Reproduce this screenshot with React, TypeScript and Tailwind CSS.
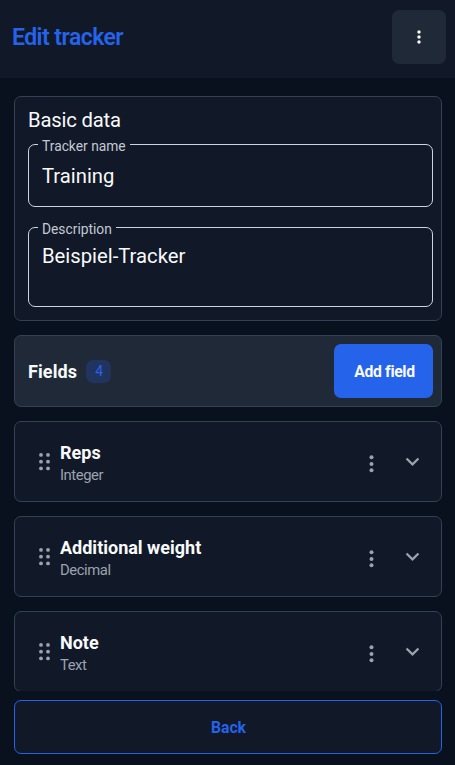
import React from 'react';
import { MdExpandMore, MdMoreVert } from 'react-icons/md';

interface TrackerField {
  id: string;
  name: string;
  type: string;
}

const fields: TrackerField[] = [
  { id: 'reps', name: 'Reps', type: 'Integer' },
  { id: 'weight', name: 'Additional weight', type: 'Decimal' },
  { id: 'note', name: 'Note', type: 'Text' },
];

const DragDots = ({ className }: { className?: string }) => (
  <svg viewBox="0 0 27 27" fill="currentColor" className={className}>
    {[6.9, 13.7, 20.4].map((y) => (
      <React.Fragment key={y}>
        <circle cx="10" cy={y} r="1.9" />
        <circle cx="17" cy={y} r="1.9" />
      </React.Fragment>
    ))}
  </svg>
);

const MoreDots = ({ className }: { className?: string }) => (
  <svg viewBox="0 0 27 27" fill="currentColor" className={className}>
    <circle cx="13.5" cy="7.2" r="2" />
    <circle cx="13.5" cy="13.9" r="2" />
    <circle cx="13.5" cy="20.2" r="2" />
  </svg>
);

const OutlinedField = ({ label, children }: { label: string; children: React.ReactNode }) => (
  <fieldset className="rounded-[7px] border border-[#cbd5e1] pl-[13px]">
    <legend className="-ml-1 h-[14px] px-1 text-[13.8px] leading-[19px] text-[#c3c9d4]">{label}</legend>
    {children}
  </fieldset>
);

const FieldCard = ({ field }: { field: TrackerField }) => (
  <div className="flex h-[81px] shrink-0 items-center rounded-[7px] border border-[#334155] bg-[#111827] pl-4 pr-[15px]">
    <DragDots className="h-[27px] w-[27px] shrink-0 text-[#9ca3af]" />
    <div className="ml-0.5 flex-1 pt-[5px]">
      <div className="text-[18px] font-bold leading-[22px] text-[#f9fafb]">{field.name}</div>
      <div className="text-[14.8px] leading-[22px] tracking-[-0.42px] text-[#9ca3af]">{field.type}</div>
    </div>
    <button className="mr-[14px] mt-1">
      <MoreDots className="h-[27px] w-[27px] text-[#9ca3af]" />
    </button>
    <button>
      <MdExpandMore className="h-[27px] w-[27px] text-[#9ca3af]" />
    </button>
  </div>
);

const App: React.FC = () => {
  return (
    <div className="flex h-screen flex-col overflow-hidden bg-[#09111e] font-['Roboto',sans-serif] text-[#f9fafb]">
      <header className="flex h-[78px] shrink-0 items-center justify-between bg-[#111827] pb-1 pl-3 pr-[9px]">
        <h1 className="pt-0.5 text-[23px] font-semibold tracking-[-0.55px] text-[#2563eb]">Edit tracker</h1>
        <button className="flex h-[54px] w-[54px] items-center justify-center rounded-[7px] bg-[#1f2937]">
          <MdMoreVert className="h-5 w-5" />
        </button>
      </header>

      {/* Scrollable form */}
      <main className="flex h-[613px] shrink-0 flex-col gap-[14px] overflow-hidden pl-[14px] pr-[13px] pt-[18px]">
        <section className="h-[225px] shrink-0 rounded-[7px] border border-[#334155] bg-[#111827] pl-[13px] pr-2 pt-[11px]">
          <h2 className="text-[20.25px] leading-6 tracking-[-0.2px]">Basic data</h2>
          <div className="mt-[5px] flex flex-col gap-[13px]">
            <OutlinedField label="Tracker name">
              <div className="h-[55px] pt-[13px] text-[20.25px] leading-6">Training</div>
            </OutlinedField>
            <OutlinedField label="Description">
              <div className="h-[72px] pt-[10px] text-[20.25px] leading-6">Beispiel-Tracker</div>
            </OutlinedField>
          </div>
        </section>

        <section className="flex h-[72px] shrink-0 items-center rounded-[7px] border border-[#334155] bg-[#1f2937] pl-[13px] pr-2">
          <h2 className="text-[18px] font-bold tracking-[0.1px]">Fields</h2>
          <span className="ml-[9px] flex h-[23px] w-[25px] items-center justify-center rounded-[7px] bg-[#20345f] pl-px pt-px text-[14px] text-[#2563eb]">4</span>
          <button className="ml-auto flex h-[54px] w-[99px] items-center justify-center rounded-[7px] bg-[#2563eb] pl-0.5 pt-0.5 text-[15.75px] font-bold tracking-[-0.35px]">
            Add field
          </button>
        </section>

        {fields.map((field) => (
          <FieldCard key={field.id} field={field} />
        ))}
      </main>

      <footer className="pl-[14px] pr-[13px] pt-[9px]">
        <button className="h-[54px] w-full rounded-[7px] border border-[#2563eb] bg-[#111827] pl-px pt-0.5 text-[15.75px] font-bold text-[#2563eb]">
          Back
        </button>
      </footer>
    </div>
  );
};

export default App;
